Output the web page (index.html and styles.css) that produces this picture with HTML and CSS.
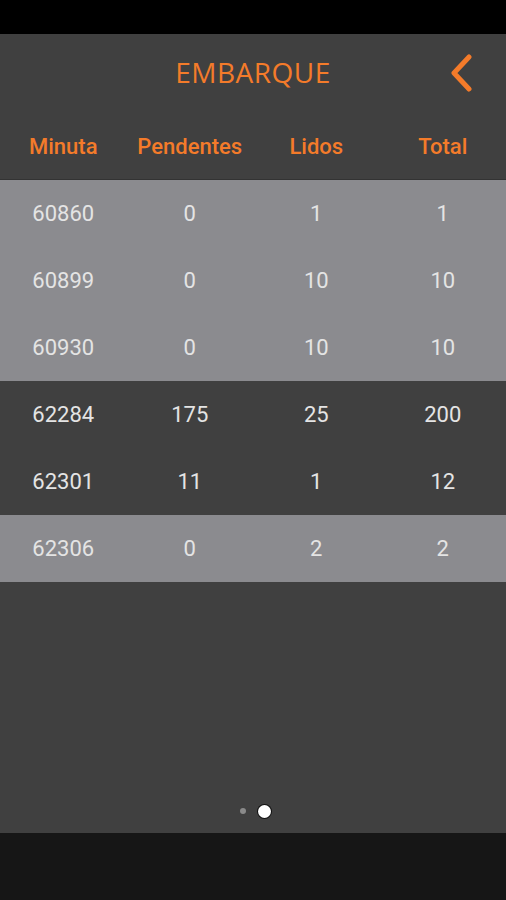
FILE: index.html
```html
<!DOCTYPE html>
<html lang="pt-BR">

<head>
    <meta charset="UTF-8">
    <meta name="viewport" content="width=device-width, initial-scale=1.0">
    <title>Embarque</title>
    <link rel="stylesheet" href="styles.css">
</head>

<body>
    <div class="status-bar"></div>
    <div class="screen">
        <header class="topo">
            <h1 class="titulo">EMBARQUE</h1>
            <button class="voltar" aria-label="Voltar">
                <svg width="24" height="40" viewBox="0 0 24 40">
                    <path d="M19 5 L4 21 L19 37" fill="none" stroke="#f47b2a" stroke-width="5" stroke-linecap="round" stroke-linejoin="round" />
                </svg>
            </button>
        </header>
        <div class="linha cabecalho">
            <span>Minuta</span>
            <span>Pendentes</span>
            <span>Lidos</span>
            <span>Total</span>
        </div>
        <ul class="lista">
            <li class="linha clara"><span>60860</span><span>0</span><span>1</span><span>1</span></li>
            <li class="linha clara"><span>60899</span><span>0</span><span>10</span><span>10</span></li>
            <li class="linha clara"><span>60930</span><span>0</span><span>10</span><span>10</span></li>
            <li class="linha"><span>62284</span><span>175</span><span>25</span><span>200</span></li>
            <li class="linha"><span>62301</span><span>11</span><span>1</span><span>12</span></li>
            <li class="linha clara"><span>62306</span><span>0</span><span>2</span><span>2</span></li>
        </ul>
        <div class="paginas">
            <span class="ponto"></span>
            <span class="ponto ativo"></span>
        </div>
    </div>
    <div class="nav-bar"></div>
</body>

</html>
```

FILE: styles.css
```css
* {
    box-sizing: border-box;
}

body {
    font-family: Roboto, Arial, sans-serif;
    margin: 0;
    padding: 0;
    height: 900px;
    display: flex;
    flex-direction: column;
    background-color: #000;
}

.status-bar {
    height: 34px;
    background-color: #000;
}

.screen {
    flex: 1;
    display: flex;
    flex-direction: column;
    background-color: #404040;
}

.topo {
    position: relative;
    height: 80px;
    display: flex;
    align-items: center;
    justify-content: center;
}

.titulo {
    margin: 0;
    margin-top: -4px;
    font-family: "Open Sans", Lato, sans-serif;
    font-weight: 400;
    font-size: 28px;
    letter-spacing: 0.5px;
    color: #f47b2a;
}

.voltar {
    position: absolute;
    right: 32px;
    top: 18px;
    padding: 0;
    border: none;
    background: none;
    cursor: pointer;
    display: flex;
}

.linha {
    display: grid;
    grid-template-columns: repeat(4, 1fr);
    align-items: center;
    height: 67px;
    text-align: center;
    font-size: 22px;
    color: #e4e4e4;
}

.cabecalho {
    height: 66px;
    font-weight: 500;
    color: #f47b2a;
    border-bottom: 1px solid #333;
}

.lista {
    list-style: none;
    padding: 0;
    margin: 0;
}

.clara {
    background-color: #8b8b8f;
}

.paginas {
    margin-top: auto;
    height: 28px;
    display: flex;
    justify-content: center;
    align-items: flex-start;
    padding-left: 5px;
    gap: 12px;
}

.ponto {
    width: 6px;
    height: 6px;
    margin-top: 3px;
    border-radius: 50%;
    background-color: #8a8a8a;
}

.ponto.ativo {
    width: 13px;
    height: 13px;
    margin-top: 0;
    background-color: #fff;
    box-shadow: 0 0 0 1px #111;
}

.nav-bar {
    height: 67px;
    background-color: #161616;
}
```
